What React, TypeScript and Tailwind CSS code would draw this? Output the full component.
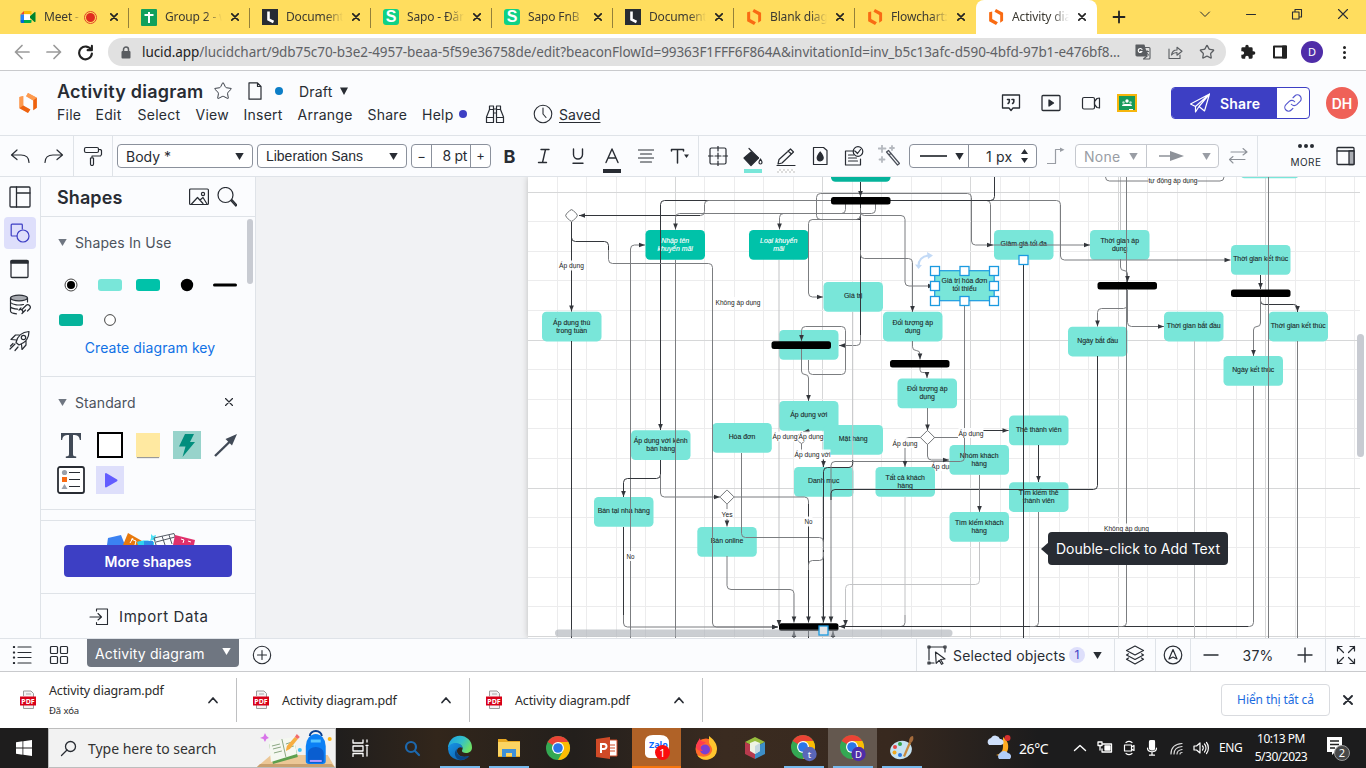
import React from "react";
import { Star } from "lucide-react";

type Kids = { children?: React.ReactNode };

const UI = "font-['Noto_Sans',sans-serif]";
const APP = "font-[Inter,sans-serif]";

function Ic({ s = 24, w = 1.2, c = "#282c33", vb = 24, cls = "", children }: Kids & { s?: number; w?: number; c?: string; vb?: number; cls?: string }) {
  return (
    <svg width={s} height={s} viewBox={`0 0 ${vb} ${vb}`} fill="none" stroke={c} strokeWidth={w} strokeLinecap="round" strokeLinejoin="round" className={"shrink-0 " + cls}>
      {children}
    </svg>
  );
}

function LucidLogo({ s = 16, shaded }: { s?: number; shaded?: boolean }) {
  return (
    <svg width={s} height={s} viewBox="0 0 20 21" className="shrink-0">
      <path d="M1 4.200 5 3.200V13l7.500 4.300L10 21l-9-5z" fill="#f96b13" />
      <path d="M8 3.500 10 0l9.300 5v10.500L15.500 18V8z" fill="#f96b13" />
      {shaded && <path d="M1 4.200 5 3.200V13L1 16zM8 3.500 10 0l9.300 5-3.800 3z" fill="#ffb46e" fillOpacity=".65" />}
      {shaded && <path d="m5 13 7.500 4.300L10 21l-9-5zM19.300 5v10.500L15.500 18V8z" fill="#d9530a" fillOpacity=".35" />}
    </svg>
  );
}

const favicons: Record<string, React.ReactNode> = {
  meet: (
    <svg width="16" height="16" viewBox="0 0 16 16">
      <path d="M4 2h7.5v3.2H4z" fill="#fbbc04" />
      <path d="M.5 5.5 4 2v3.5z" fill="#ea4335" />
      <path d="M.5 5.5H4V11H.5z" fill="#2684fc" />
      <path d="M.5 11H4v3H1.5a1 1 0 0 1-1-1z" fill="#0066da" />
      <path d="M4 11h7.5v2a1 1 0 0 1-1 1H4z" fill="#00ac47" />
      <path d="m9 8 5.5-4.8a.6.6 0 0 1 1 .5v8.8a.6.6 0 0 1-1 .4z" fill="#00832d" />
      <path d="M4 5.2h6V11H4z" fill="#fff" />
    </svg>
  ),
  sheet: (
    <svg width="16" height="17" viewBox="0 0 16 17">
      <rect width="16" height="17" rx="1" fill="#12a05c" />
      <path d="M8 3v11M3.5 6h9" stroke="#fff" strokeWidth="2" />
    </svg>
  ),
  doc: (
    <svg width="16" height="16" viewBox="0 0 16 16">
      <rect width="16" height="16" fill="#282c33" />
      <path d="M6.5 2.5v8l5 2.5" stroke="#fff" strokeWidth="2.6" fill="none" />
    </svg>
  ),
  sapo: (
    <span className="flex h-4 w-4 items-center justify-center rounded-[3px] bg-[#0fd186] font-['Liberation_Sans',sans-serif] text-[16px] leading-none font-bold text-white">S</span>
  ),
  lucid: <LucidLogo />,
};

function Tab({ icon, title, active, rec, sep = true }: { icon: string; title: string; active?: boolean; rec?: boolean; sep?: boolean }) {
  return (
    <div className={"relative flex h-[34px] w-[121px] shrink-0 items-center pl-3 " + (active ? "rounded-t-lg bg-white" : "")}>
      {favicons[icon]}
      <span className={"ml-2 overflow-hidden text-[12px] tracking-[-0.15px] whitespace-nowrap text-[#3c3a32] [mask-image:linear-gradient(90deg,#000_70%,transparent)] " + (rec ? "w-[37px]" : "w-[57px]")}>{title}</span>
      {rec && (
        <span className="ml-[3px] flex h-[13px] w-[13px] items-center justify-center rounded-full border border-[#e2452b]">
          <span className="h-[9px] w-[9px] rounded-full bg-[#e02c20]" />
        </span>
      )}
      <Ic s={8} vb={8} w={1.7} c="#222" cls={rec ? "ml-[13px]" : "ml-[9px]"}><path d="M.8.8l6.4 6.4M7.2.8.8 7.2" /></Ic>
      {sep && !active && <span className="absolute top-2 right-0 h-5 w-px bg-[#94803a]" />}
    </div>
  );
}

function BrowserTop() {
  return (
    <div className={UI}>
      <div className="flex h-[34px] bg-[#ffdd5e] pl-2">
        <Tab icon="meet" title="Meet - " rec />
        <Tab icon="sheet" title="Group 2 - w" />
        <Tab icon="doc" title="Documents" />
        <Tab icon="sapo" title="Sapo - Đăng" />
        <Tab icon="sapo" title="Sapo FnB" />
        <Tab icon="doc" title="Documents" />
        <Tab icon="lucid" title="Blank diagra" />
        <Tab icon="lucid" title="Flowchart: " sep={false} />
        <Tab icon="lucid" title="Activity diag" active />
        <div className="flex w-[44px] items-center justify-center"><Ic s={14} vb={14} w={1.8} c="#222"><path d="M7 1.5v11M1.5 7h11" /></Ic></div>
        <div className="ml-auto flex items-start pt-[8px]">
          <Ic s={12} vb={12} w={1} cls="mr-[34px]"><path d="m1.500 4 4.500 4.500L10.500 4" /></Ic>
          <Ic s={12} vb={12} w={1.1} cls="mr-[34px]"><path d="M1.500 6.500h9" /></Ic>
          <Ic s={12} vb={12} w={1.1} cls="mr-[34px]"><path d="M1.500 4h6.500v7H1.500zM4 4V1.500h6.500V9H8" /></Ic>
          <Ic s={12} vb={12} w={1.1} cls="mr-[17px]"><path d="m1.500 1.500 9 9m0-9-9 9" /></Ic>
        </div>
      </div>
      <div className="flex h-[37px] items-center border-b border-[#c9cacd] bg-white pl-[14px]">
        <Ic s={16} vb={16} w={1.7} c="#9a9a9a"><path d="M15 8H1.500M8 1.500 1.500 8 8 14.500" /></Ic>
        <Ic s={16} vb={16} w={1.7} c="#9a9a9a" cls="ml-4"><path d="M1 8h13.500M8 1.500 14.500 8 8 14.500" /></Ic>
        <Ic s={17} vb={16} w={2} c="#222" cls="ml-[15px]"><path d="M13.300 5.500A6 6 0 1 0 14 9M14 1.800v4h-4" /></Ic>
        <div className="ml-[14px] flex h-7 w-[1118px] items-center rounded-full bg-[#e1e1e1] pl-[13px]">
          <svg width="10" height="13" viewBox="0 0 10 13" className="shrink-0"><path d="M2.500 6V3.500a2.500 2.500 0 0 1 5 0V6" stroke="#5a5d61" strokeWidth="1.500" fill="none" /><rect x=".5" y="5" width="9" height="7.500" rx="1" fill="#5a5d61" /></svg>
          <span className="ml-[11px] w-[982px] shrink-0 text-[13.5px] tracking-[-0.07px] whitespace-nowrap text-[#5f6266]"><span className="text-[#222]">lucid.app</span>/lucidchart/9db75c70-b3e2-4957-beaa-5f59e36758de/edit?beaconFlowId=99363F1FFF6F864A&amp;invitationId=inv_b5c13afc-d590-4bfd-97b1-e476bf8...</span>
          <Ic s={16} vb={16} w={1.1} c="#5a5d61" cls="ml-[11px]"><path d="M1 1h8l3 11H2a1 1 0 0 1-1-1z" fill="#5a5d61" /><path d="M10 3.500h4a1 1 0 0 1 1 1V14a1 1 0 0 1-1 1H8.500l3.500-3M10.500 7.500h3M12 6.500v1c0 2-1 3-1.500 3.500M11.500 8.500l2 2.500" /><path d="M7 5.500a2 2 0 1 0 0 2H5.500" stroke="#fff" /></Ic>
          <Ic s={16} vb={16} w={1.1} c="#5a5d61" cls="ml-4"><path d="M2 5v9.500h11V11M4.500 11C5 7.500 7 6 10 6V3.200L15 7.200l-5 4V8.500C8 8.500 6 9 4.500 11z" /></Ic>
          <Star size={16} strokeWidth={1.9} color="#5a5d61" className="ml-4" />
        </div>
        <svg width="16" height="16" viewBox="0 0 24 24" className="ml-[14px]"><path d="M20.500 11H19V7a2 2 0 0 0-2-2h-4V3.500a2.500 2.500 0 0 0-5 0V5H4a2 2 0 0 0-2 2v3.800h1.500a2.700 2.700 0 0 1 0 5.400H2V20a2 2 0 0 0 2 2h3.800v-1.500a2.700 2.700 0 0 1 5.400 0V22H17a2 2 0 0 0 2-2v-4h1.500a2.500 2.500 0 0 0 0-5z" fill="#222" /></svg>
        <Ic s={14} vb={14} w={2} c="#222" cls="ml-[17px]"><path d="M1 1.500h12v11H1z" /><path d="M10 1.500h3v11h-3z" fill="#222" /></Ic>
        <span className="ml-[14px] flex h-[22px] w-[22px] items-center justify-center rounded-full bg-[#4f2da8] text-[11px] text-white">D</span>
        <span className="ml-5 flex flex-col gap-[2px]">
          <i className="h-[3px] w-[3px] rounded-full bg-[#222]" /><i className="h-[3px] w-[3px] rounded-full bg-[#222]" /><i className="h-[3px] w-[3px] rounded-full bg-[#222]" />
        </span>
      </div>
    </div>
  );
}

function AppHeader() {
  return (
    <div className={"flex h-[64px] bg-[#fbfcfe] text-[#282c33] " + APP}>
      <div className="flex w-[57px] items-center pl-[18px]"><LucidLogo s={20} shaded /></div>
      <div className="w-[560px] pt-[8px]">
        <div className="flex h-6 items-center">
          <span className="w-[156px] text-[18px] font-semibold tracking-[0.25px] whitespace-nowrap">Activity diagram</span>
          <Star size={20} strokeWidth={1.2} color="#3c414a" />
          <Ic s={18} vb={18} w={1.2} cls="ml-[13px]"><path d="M3 .8h8.500L15 4.500v12.700H3zM11.500.8v3.700H15" /></Ic>
          <span className="ml-[11px] h-2 w-2 rounded-full bg-[#0c7ec7]" />
          <span className="ml-4 w-[41px] text-[14px] tracking-[0.2px]">Draft</span>
          <svg width="8" height="8" viewBox="0 0 8 8"><path d="M0 .5h8L4 8z" fill="#282c33" /></svg>
        </div>
        <div className="-mt-px flex h-6 items-center text-[14px] tracking-[0.25px] whitespace-nowrap">
          <span className="w-[38.5px]">File</span><span className="w-[42px]">Edit</span><span className="w-[58px]">Select</span><span className="w-[48px]">View</span>
          <span className="w-[54px]">Insert</span><span className="w-[70px]">Arrange</span><span className="w-[54.5px]">Share</span><span className="w-[37px]">Help</span>
          <span className="h-2 w-2 rounded-full bg-[#3d3fc4]" />
          <Ic s={20} vb={20} w={1.2} cls="ml-[18px]"><path d="M4.500 5.500V2h4v3.500M11.500 5.500V2h4v3.500M4.500 5.500h4v13H1.500V13zM15.500 5.500h-4v13h7V13zM8.500 9h3M1.500 13.500h7M11.500 13.500h7M8.500 5h3" /></Ic>
          <Ic s={20} vb={20} w={1.1} cls="ml-[28px]"><circle cx="10" cy="10" r="8.800" /><path d="M10 4v6l3 3.500" /></Ic>
          <span className="ml-[6px] pt-px tracking-[0.1px] underline underline-offset-2">Saved</span>
        </div>
      </div>
      <div className="ml-auto flex items-center">
        <Ic s={20} vb={20} w={1.3}><path d="M1.500 2h17v13H12l-2 2.500L8 15H1.500z" /><path d="M6.500 6.500h1.800v2c0 1-.5 1.500-1.200 2M11 6.500h1.800v2c0 1-.5 1.500-1.200 2" strokeWidth="1.600" /></Ic>
        <Ic s={20} vb={20} w={1.3} cls="ml-5"><rect x="1" y="2.500" width="18" height="15" rx="1" /><path d="M8 7v6l4.500-3z" fill="#282c33" /></Ic>
        <Ic s={20} vb={20} w={1.2} cls="ml-5"><rect x="1.500" y="4.500" width="12" height="11.500" rx="1.500" /><path d="m13.500 8.500 2.500-3 2.500-.500v10l-2.500-.5-2.500-3z" /></Ic>
        <svg width="20" height="18" viewBox="0 0 20 18" className="ml-4"><rect width="20" height="18" fill="#f6b60d" /><rect x="2" y="2" width="16" height="14" fill="#159a5a" /><circle cx="10" cy="7" r="1.700" fill="#fff" /><circle cx="6.500" cy="8.500" r="1.200" fill="#b6dfc9" /><circle cx="13.500" cy="8.500" r="1.200" fill="#b6dfc9" /><path d="M5 12c0-2 2-2 5-2s5 0 5 2z" fill="#fff" /><path d="M12 15h4v1h-4z" fill="#fff" /></svg>
        <div className="ml-[34px] flex h-8 w-[139px] overflow-hidden rounded border border-[#3d3fc4] bg-white">
          <div className="flex w-[105px] items-center bg-[#3d3fc4]">
            <Ic s={22} vb={22} w={1.2} c="#fff" cls="ml-[17px]"><path d="M20.500 2 1.500 12l5 2.500zM20.500 2l-5 17-5.500-4.500zM6.500 14.500V20l3.500-5.500M6.500 14.500 20.500 2 10 14.500" /></Ic>
            <span className="ml-[9px] text-[14px] font-semibold tracking-[0.2px] text-white">Share</span>
          </div>
          <div className="flex flex-1 items-center justify-center"><Ic s={20} vb={24} w={1.4} c="#5557cf"><path d="M10 13.500a4.500 4.500 0 0 0 6.500.500l4-4a4.500 4.500 0 0 0-6.400-6.400L12 5.700M14 10.500A4.500 4.500 0 0 0 7.500 10l-4 4a4.500 4.500 0 0 0 6.400 6.400l2-2" /></Ic></div>
        </div>
        <span className="mr-2 ml-4 flex h-8 w-8 items-center justify-center rounded-full bg-[#ef6158] text-[14px] font-semibold text-white">DH</span>
      </div>
    </div>
  );
}

const Down = ({ c = "#282c33", cls = "" }: { c?: string; cls?: string }) => (
  <svg width="9" height="7" viewBox="0 0 9 7" className={"shrink-0 " + cls}><path d="M.3 0h8.400L4.500 7z" fill={c} /></svg>
);

function Cell({ w, children }: Kids & { w: string }) {
  return <div className={"flex h-full shrink-0 flex-col items-center justify-center " + w}>{children}</div>;
}

function Toolbar() {
  return (
    <div className={"flex h-[42px] items-center border-y border-[#dfe3e8] bg-[#fbfcfe] text-[#282c33] " + APP}>
      <div className="flex h-full w-[74px] items-center border-r border-[#dfe3e8] pl-[10px]">
        <Ic s={20} vb={20} w={1.2}><path d="M19 16.500c0-5-3-7.500-8-7.500H1.500M7 4 1.500 9 7 13.500" /></Ic>
        <Ic s={20} vb={20} w={1.2} cls="ml-[14px]"><path d="M1 16.500C1 11.500 4 9 9 9h9.500M13 4l5.500 5-5.500 4.500" /></Ic>
      </div>
      <div className="flex h-full w-[39px] items-center justify-center border-r border-[#dfe3e8]">
        <Ic s={20} vb={20} w={1.2}><rect x="1.500" y="1.500" width="14" height="5" rx="1.500" /><path d="M15.500 3.500h2l1 1v4l-1 1.500H9v2M7.500 12h3v6a1.500 1.500 0 0 1-3 0z" /></Ic>
      </div>
      <div className="ml-1 flex h-[24px] w-[136px] items-center rounded border border-[#8b919c] bg-white px-2 text-[14px]">Body *<Down cls="ml-auto" /></div>
      <div className="ml-1 flex h-[24px] w-[150px] items-center rounded border border-[#8b919c] bg-white px-2 font-['Liberation_Sans',sans-serif] text-[14px]"><span className="tracking-[-0.02px]">Liberation Sans</span><Down cls="ml-auto" /></div>
      <div className="ml-1 flex h-[24px] w-[80px] items-center rounded border border-[#8b919c] bg-white text-[13px]">
        <span className="w-[20px] border-r border-[#8b919c] text-center leading-[22px]">−</span><span className="w-[39px] border-r border-[#8b919c] pr-[3px] text-right text-[14px] leading-[22px] tracking-[-0.3px]">8 pt</span><span className="flex-1 text-center">+</span>
      </div>
      <Cell w="w-[37px]"><span className="text-[18px] font-bold">B</span></Cell>
      <Cell w="w-[32px]"><Ic s={16} vb={16} w={1.4}><path d="M5 1.500h8M2.500 14.500h8M9.500 1.500l-3 13" /></Ic></Cell>
      <Cell w="w-[35px]"><Ic s={16} vb={16} w={1.4}><path d="M3.500 1v5.500a4.500 4.500 0 0 0 9 0V1M3 15.300h10" /></Ic></Cell>
      <Cell w="w-[33px]"><div className="mt-[9px] flex flex-col items-center"><Ic s={16} vb={16} w={1.4}><path d="M2 14.500 8 1l6 13.500M4 10h8" /></Ic><span className="mt-[5px] h-[4px] w-[18px] bg-[#282c33]" /></div></Cell>
      <Cell w="w-[35px]"><Ic s={16} vb={16} w={1.2}><path d="M0 2h16M2.500 6h11M0 10h16M2.500 14h11" /></Ic></Cell>
      <Cell w="w-[34px]"><Ic s={20} vb={20} w={1.5}><path d="M1.500 5V3.500h12V5M7.500 3.500V17" /><path d="M14 8.500h5l-2.500 3.500z" fill="#282c33" stroke="none" /></Ic></Cell>
      <div className="ml-px h-full w-px bg-[#dfe3e8]" />
      <Cell w="w-[38px]"><Ic s={20} vb={20} w={1.2}><rect x="2" y="2" width="16" height="16" rx="1.500" /><path d="M10 0v5M10 15v5M0 10h5M15 10h5M10 7v6M7 10h6" /></Ic></Cell>
      <Cell w="w-[31px]"><div className="mt-[8px] flex flex-col items-center"><Ic s={20} vb={20} w={1.2}><path d="m8 5-7 6 7 7.500 7.500-7.500z" fill="#282c33" /><path d="M6 1.500 15.500 11H2M17.500 12c1 1.500 1.500 2.500 1.500 3.500a1.500 1.500 0 0 1-3 0c0-1 .5-2 1.500-3.500z" /></Ic><span className="mt-[2px] h-[4px] w-[18px] bg-[#79e6d9]" /></div></Cell>
      <Cell w="w-[36px]"><div className="mt-[8px] flex flex-col items-center"><Ic s={20} vb={20} w={1.2}><path d="M1 18.500h18M2 17l1-4.500L14.500 2l3 3L6 16zM12 4l3.500 3" /></Ic><span className="mt-[2px] h-[4px] w-[18px] bg-[repeating-conic-gradient(#ddd_0_25%,#fff_0_50%)] bg-[length:4px_4px]" /></div></Cell>
      <Cell w="w-[32px]"><Ic s={20} vb={20} w={1.2}><path d="M3.500 1.500h10L17 4.500v14H3.500z" /><path d="M10.200 6c2 2.500 3 4.200 3 5.800a3 3 0 0 1-6 0c0-1.600 1-3.300 3-5.800z" fill="#282c33" /></Ic></Cell>
      <Cell w="w-[36px]"><Ic s={20} vb={20} w={1.2}><path d="M11 5H1.500v14h15v-6M4.500 9h5M4.500 12h8M4.500 15h9" /><circle cx="14" cy="5.500" r="4.800" /><path d="m11.500 5.500 2 2 3-4" /></Ic></Cell>
      <Cell w="w-[34px]"><Ic s={22} vb={22} w={1.2} c="#4b505a"><path d="m8.500 7 11 13 2-1.500-11-13zM11 10l2-1.800" /><path d="M4 0v7M.5 3.500h7M4 12v5M1.500 14.500h5M14 1v4M12 3h4" stroke="#b5b9bf" strokeWidth="1.800" /></Ic></Cell>
      <div className="ml-[3px] flex h-[24px] w-[128px] items-center rounded border border-[#8b919c] bg-white">
        <div className="flex h-full w-[59px] items-center border-r border-[#8b919c]"><span className="ml-[10px] h-[1.5px] w-[27px] bg-[#4a4d52]" /><Down cls="ml-[8px]" /></div>
        <span className="ml-[17px] text-[14px] tracking-[0.2px]">1 px</span>
        <svg width="7" height="14" viewBox="0 0 7 14" className="ml-[9px]"><path d="M0 5h7L3.500 0zM0 9h7l-3.500 5z" fill="#282c33" /></svg>
      </div>
      <Cell w="w-[38px]"><Ic s={18} vb={18} w={1.2} c="#999da4"><path d="M.5 16.500h8v-14h5" /><path d="M13 .5 17.500 2.700 13 5z" fill="#999da4" stroke="none" /></Ic></Cell>
      <div className="flex h-[24px] w-[144px] items-center rounded border border-[#c5c8ce] bg-white text-[#999da4]">
        <div className="flex h-full w-[71px] items-center border-r border-[#c5c8ce] pl-[8px] text-[14px] tracking-[0.3px]">None<Down c="#999da4" cls="ml-auto mr-2" /></div>
        <svg width="25" height="10" viewBox="0 0 25 10" className="ml-[12px]"><path d="M0 5h12" stroke="#8e9299" strokeWidth="1.500" /><path d="M11 0l14 5-14 5z" fill="#8e9299" /></svg>
        <Down c="#999da4" cls="ml-[18px]" />
      </div>
      <Cell w="w-[38px]"><Ic s={20} vb={20} w={1.1} c="#8e9299"><path d="M3 6h16M15 2.500 19 6l-4 3M17 13.500H1.500M5 10.500l-3.500 3L5 17" /></Ic></Cell>
      <div className="h-full w-px bg-[#dfe3e8]" />
      <div className="ml-[32px] flex w-[32px] flex-col items-center gap-[7px]">
        <span className="flex gap-[2px] pt-px"><i className="h-[4px] w-[4px] rounded-full bg-[#282c33]" /><i className="h-[4px] w-[4px] rounded-full bg-[#282c33]" /><i className="h-[4px] w-[4px] rounded-full bg-[#282c33]" /></span>
        <span className="text-[10px] leading-[14px] tracking-[0.5px]">MORE</span>
      </div>
      <Ic s={20} vb={20} w={1.3} cls="ml-[14px]"><rect x="1" y="1.500" width="17" height="17" rx="1" /><path d="M1 5h17" /><path d="M13 5h5v13.500h-5z" fill="#aaadb3" /></Ic>
    </div>
  );
}

function SidePanel() {
  return (
    <div className={"flex w-[256px] shrink-0 bg-[#fbfcfe] text-[#282c33] " + APP}>
      <div className="flex w-[41px] shrink-0 flex-col items-center border-r border-[#dfe3e8]">
        <Ic s={22} vb={22} w={1.3} cls="mt-[9px]"><rect x="1" y="1" width="20" height="20" rx="1" /><path d="M7.500 1v20M7.500 7H21" /></Ic>
        <div className="mt-[9px] flex h-8 w-8 items-center justify-center rounded bg-[#dedffb]"><Ic s={20} vb={20} w={1.2} c="#3d3fc4"><path d="M7 13H2a.8.800 0 0 1-.8-.8V2A.8.800 0 0 1 2 1.200h9.500a.8.800 0 0 1 .8.800v4" /><circle cx="13" cy="13" r="6" /></Ic></div>
        <Ic s={20} vb={20} w={1.3} cls="mt-[10px]"><rect x="1" y="1.500" width="17" height="17" rx="1" /><path d="M1 2h17v2H1z" fill="#282c33" /></Ic>
        <Ic s={22} vb={22} w={1.2} cls="mt-[15px]"><ellipse cx="10" cy="4" rx="8.500" ry="2.800" fill="#a8abb1" /><path d="M1.500 4v13c0 1.500 3 2.500 6 2.800M18.500 4v4M1.500 8.500c2 2.500 9 3 13 2M1.500 13c1.500 1.500 4 2 7 2.200" /><path d="m13 14 3.500-3.500a2.300 2.300 0 0 1 3.500 3.500l-2 2M16 15l-3.500 3.500A2.300 2.300 0 0 0 9.500 15l2-2" transform="translate(.5 1)" /></Ic>
        <Ic s={22} vb={22} w={1.2} cls="mt-[14px]"><path d="M7 12.500C8.500 6 13 2 20 1.500 20 8.500 16 13 10 15zM7.500 10 2 9.500 6.500 5h4M12.500 14.500l.5 5 4-4.500v-4" /><circle cx="14.500" cy="7.500" r="2.200" /><path d="m6 14-5 5M9 17l-3 3.500M4 13.500l-2.500 2.500" /></Ic>
      </div>
      <div className="flex w-[215px] flex-col border-r border-[#dfe3e8]">
        <div className="flex h-[40px] shrink-0 items-center border-b border-[#dfe3e8] pl-4">
          <span className="w-[132px] pt-0.5 text-[18px] font-semibold tracking-[0.1px]">Shapes</span>
          <Ic s={20} vb={20} w={1.2}><rect x=".6" y="2" width="18.800" height="15.500" rx="1" /><circle cx="14" cy="7" r="1.600" /><path d="m2.500 17 6-6.500 5.500 6M11 13l3-2.500 4 6.500" /></Ic>
          <Ic s={20} vb={20} w={1.2} cls="ml-2"><circle cx="8.500" cy="8" r="7.500" /><path d="m13.800 13.500 5 5.500 1-1-5-5.500" /></Ic>
        </div>
        <div className="relative flex-1 border-b border-[#dfe3e8]">
          <div className="flex h-[160px] flex-col border-b border-[#dfe3e8] px-[17px] pt-[15px]">
            <div className="flex h-5 items-center text-[14px] tracking-[0.1px] text-[#4c535d]"><Down c="#6f7681" cls="mr-2" />Shapes In Use</div>
            <div className="mt-[23px] flex h-5 items-center">
              <svg width="180" height="14" viewBox="0 0 180 14">
                <circle cx="13" cy="7" r="6" fill="#fff" stroke="#444" /><circle cx="13" cy="7" r="4" />
                <rect x="40" y="1" width="24" height="12" rx="3" fill="#79e6d9" /><rect x="78" y="1" width="24" height="12" rx="3" fill="#00c2a9" />
                <circle cx="129" cy="7" r="6.200" /><rect x="155" y="5.500" width="24" height="3" rx="1.500" />
              </svg>
            </div>
            <div className="mt-[15px] flex h-5 items-center">
              <svg width="100" height="14" viewBox="0 0 100 14"><rect x="1" y="1" width="24" height="12" rx="3" fill="#05b39b" /><circle cx="52" cy="7" r="5.400" fill="#fff" stroke="#444" /></svg>
            </div>
            <div className="mt-[7px] pl-1 text-center text-[14px] tracking-[0.1px] text-[#1071e5]">Create diagram key</div>
          </div>
          <div className="flex h-[133px] flex-col border-b border-[#dfe3e8] px-[17px] pt-[15px]">
            <div className="flex h-5 items-center text-[14px] tracking-[0.1px] text-[#4c535d]"><Down c="#6f7681" cls="mr-2" />Standard<Ic s={8} vb={8} w={1.2} cls="mr-[5px] ml-auto"><path d="m.5.500 7 7m0-7-7 7" /></Ic></div>
            <div className="mt-[19px] flex h-7 items-center">
              <span className="w-[34px] pl-[2px]">
                <svg width="22" height="26" viewBox="0 0 22 26"><path d="M1 8V1h20v7h-1.200c-.4-3-1.500-4.800-5-5H13v19c0 2 1 2.300 3.200 2.500V26H5.800v-1.500C8 24.300 9 24 9 22V3H7.200c-3.500.2-4.600 2-5 5z" fill="#414a57" /></svg>
              </span>
              <span className="ml-[5px] h-[26px] w-[26px] border-2 border-black bg-white" />
              <span className="ml-[13px] h-[24px] w-[24px] bg-[#ffe9a1] shadow-[0_2px_1px_-1px_#999]" />
              <svg width="28" height="28" viewBox="0 0 28 28" className="ml-[13px]"><path d="M0 0h28v28H0z" fill="#97d3cb" /><path d="M12 3h9l-4 8h5L9.500 26l3-10.500H6z" fill="#018e7d" /></svg>
              <svg width="26" height="26" viewBox="0 0 26 26" className="ml-[11px]"><path d="M3 24 20 7.500" stroke="#414a57" strokeWidth="2.400" /><path d="M25 2 13.500 7l6.500 6.500z" fill="#414a57" /></svg>
            </div>
            <div className="mt-[7px] flex h-7 items-center">
              <svg width="28" height="28" viewBox="0 0 28 28" className="-ml-px"><rect x="1" y="1" width="26" height="26" rx="2" fill="#fff" stroke="#282c33" strokeWidth="1.800" /><circle cx="7.500" cy="6.500" r="2.600" fill="#9aa0aa" /><path d="M5 11h5v5H5z" fill="#f96b13" /><path d="M4.500 23h6l-3-5z" fill="#9aa0aa" /><path d="M12 6.500h11M12 13.500h11M12 20.500h11" stroke="#282c33" strokeWidth="1.200" /></svg>
              <svg width="28" height="28" viewBox="0 0 28 28" className="ml-[11px]"><path d="M0 0h28v28H0z" fill="#dedffb" /><path d="M10 8v12.500L20.500 14.300z" fill="#635dff" stroke="#635dff" strokeWidth="2" strokeLinejoin="round" /></svg>
            </div>
          </div>
          <span className="absolute top-[2px] right-[2px] h-[65px] w-[6px] rounded-full bg-[#c8cbd2]" />
        </div>
        <div className="flex h-[73px] shrink-0 flex-col items-center border-b border-[#dfe3e8]">
          <svg width="92" height="12" viewBox="0 0 92 12" className="mt-[12px] ml-[5px]">
            <path d="M3 5 16 2l4 10H2z" fill="#3b82f2" /><path d="m23 0 14 8-3 4H18z" fill="#e8790c" /><path d="m26 6 5 2-1 4M28 5l-3 5" stroke="#fff" fill="none" />
            <path d="M32 9c5-2 12-2 17 0v3H33z" fill="#2ed3ee" /><path d="M39 8h9v4h-9z" fill="#2f8de9" /><path d="m46 1 2 2 3-1-1 4 1 2-3-1-3 1 1-3z" fill="#4de0f5" />
            <path d="M49 5 69 .5l4 11M49 5l2 7M51 9l19-5M57 3l3 9M64 2l3 9" stroke="#555b66" fill="none" /><path d="m70 2 20 5-1 5H68z" fill="#e0316c" /><path d="M76 6l3 1-1 3M83 8l3 1" stroke="#fff" fill="none" />
          </svg>
          <div className="flex h-8 w-[168px] items-center justify-center rounded bg-[#3d3fc4] text-[14px] font-semibold tracking-[-0.05px] text-white">More shapes</div>
        </div>
        <div className="flex h-[44px] shrink-0 items-center pt-[3px] pl-[48px] text-[15px] tracking-[0.6px]">
          <Ic s={20} vb={20} w={1.1} cls="mr-[10px] -mt-[2px]"><path d="M7.500 4V2h11v15.500h-11v-2M1 10h11.500M9 6.500l3.500 3.500L9 13" /></Ic>Import Data
        </div>
      </div>
    </div>
  );
}

const LIGHT = "#79e6d9", MID = "#00c2a9";
type Node = [number, number, string[], string?];
const nodes: Node[] = [
  [831, 152, [], "#05b39b"], [1240, 148.5, []],
  [645.5, 230, ["Nhập tên", "khuyến mãi"], MID], [749, 230, ["Loại khuyến", "mãi"], MID],
  [542, 311.7, ["Áp dụng thù", "trong tuần"]], [823.5, 282, ["Giá trị"]], [779, 330, []],
  [883, 311.7, ["Đối tượng áp", "dụng"]], [994, 230, ["Giảm giá tối đa"]], [1090, 230, ["Thời gian áp", "dụng"]],
  [1231, 245, ["Thời gian kết thúc"]], [1268.5, 311.7, ["Thời gian kết thúc"]], [1164, 311.7, ["Thời gian bắt đầu"]],
  [1068, 326.7, ["Ngày bắt đầu"]], [1223.5, 356, ["Ngày kết thúc"]], [897.5, 378.5, ["Đối tượng áp", "dụng"]],
  [1009, 415.5, ["Thẻ thành viên"]], [949.5, 445, ["Nhóm khách", "hàng"]], [875.5, 467, ["Tất cả khách", "hàng"]],
  [1009, 482.2, ["Tìm kiếm thẻ", "thành viên"]], [949.5, 512, ["Tìm kiếm khách", "hàng"]],
  [779, 401, ["Áp dụng với"]], [712.3, 423, ["Hóa đơn"]], [823.5, 425, ["Mặt hàng"]], [794, 467, ["Danh mục"]],
  [631, 430.3, ["Áp dụng với kênh", "bán hàng"]], [594, 497, ["Bán tại nhà hàng"]], [697.3, 527, ["Bán online"]],
];
const bars: [number, number][] = [[831, 197], [771.5, 341.3], [890, 360], [1097.5, 282], [1231, 289.5], [779, 623.3]];

/* Each connector: stroke shade, corner points, arrow head at the end. */
type Wire = [string, number[], boolean?];
const K = "#33363b", G = "#7b7d80", L = "#c2c3c5";
const wires: Wire[] = [
  [K, [860.5, 182, 860.5, 197], true],
  [K, [831, 200.5, 660.5, 200.5, 660.5, 430], true],
  [G, [831, 200.5, 704.5, 200.5, 704.5, 215.5, 690, 215.5]],
  [K, [700, 215.5, 579, 215.5], true],
  [G, [845.5, 204, 845.5, 213.5, 675.5, 213.5, 675.5, 229.5], true],
  [G, [875.5, 204, 875.5, 213.5, 779.5, 213.5, 779.5, 229.5], true],
  [G, [860.5, 210, 860.5, 219.5, 816.5, 219.5, 816.5, 193.5, 971.5, 193.5, 971.5, 245, 993, 245], true],
  [K, [890, 200.5, 990, 200.5]],
  [G, [990, 200.5, 1060.5, 200.5, 1060.5, 260, 1230.5, 260], true],
  [G, [980, 200.5, 990.5, 200.5, 990.5, 245, 993, 245]],
  [K, [994.5, 177, 994.5, 200.5, 980, 200.5]],
  [G, [993, 245, 1090, 245], true],
  [K, [860.5, 204, 860.5, 335]], [G, [860.5, 335, 860.5, 345.5, 839, 345.5], true],
  [K, [860.5, 219.5, 812.5, 219.5]],
  [G, [860.5, 210, 860.5, 219.5, 808.5, 219.5, 808.5, 297, 823, 297], true],
  [G, [860.5, 208, 860.5, 215.5, 905, 215.5, 905, 286, 934, 286], true],
  [G, [860.5, 250, 860.5, 258.5, 912.5, 258.5, 912.5, 312], true],
  [K, [571.5, 222, 571.5, 311.5], true],
  [K, [571.5, 341, 571.5, 638]],
  [K, [571.5, 230, 571.5, 241.5, 608.5, 241.5, 608.5, 252]],
  [G, [608.5, 250, 608.5, 263.5, 712.5, 263.5, 712.5, 627, 778, 627], true],
  [G, [630.5, 638, 630.5, 245, 645, 245], true],
  [G, [675.5, 260, 675.5, 638]],
  [L, [779, 260, 779, 626], true],
  [G, [845.5, 350, 845.5, 326.5, 801.5, 326.5, 801.5, 341], true],
  [G, [845.5, 345, 845.5, 374.5, 808.5, 374.5, 808.5, 360]],
  [G, [801.5, 349, 801.5, 374.5, 808.5, 374.5, 808.5, 401], true],
  [L, [852.7, 312, 852.7, 627]],
  [K, [852.7, 460, 852.7, 467.5, 823.5, 467.5, 823.5, 622.5], true],
  [K, [823.5, 458, 823.5, 467], true],
  [G, [964.5, 301, 964.5, 461.5, 831, 461.5, 831, 622.5], true],
  [K, [1097.5, 356, 1097.5, 489.5, 831, 489.5, 831, 500]],
  [K, [810, 431, 803, 432], true],
  [G, [801.5, 444, 801.5, 452]],
  [G, [741.5, 453, 741.5, 537.5, 823.5, 537.5, 823.5, 550]],
  [K, [660.5, 460, 660.5, 478.5, 623.5, 478.5, 623.5, 497], true],
  [K, [623.5, 527, 623.5, 620]], [G, [623.5, 615, 623.5, 627, 778, 627], true],
  [G, [660.5, 475, 660.5, 497, 720, 497], true],
  [G, [734, 497, 808.5, 497, 808.5, 510]],
  [K, [808.5, 504, 808.5, 622.5], true],
  [G, [808.5, 570, 808.5, 560.5, 823.5, 560.5, 823.5, 552]],
  [G, [727, 504, 727, 526.5], true],
  [G, [727, 556, 727, 589.5, 794, 589.5, 794, 622.5], true],
  [L, [979.5, 542, 979.5, 584.5, 845.5, 584.5, 845.5, 626], true],
  [G, [905, 615, 905, 626.5, 890, 626.5]], [L, [905, 497, 905, 622]],
  [G, [1253.5, 386, 1253.5, 626.5, 1238, 626.5]],
  [K, [1248, 626.5, 839, 626.5], true],
  [G, [1038.5, 512, 1038.5, 626.5, 1030, 626.5]],
  [G, [1126.5, 177, 1126.5, 626.5, 1118, 626.5]],
  [G, [912.5, 341, 912.5, 350.5, 920, 350.5, 920, 359.5], true],
  [G, [920, 367, 920, 372.5, 927, 372.5, 927, 378], true],
  [G, [927.5, 408, 927.5, 430.5], true],
  [G, [920.5, 437.5, 905, 437.5, 905, 467], true],
  [G, [934, 437.5, 958, 437.5]], [K, [983, 430.5, 1008.5, 430.5], true],
  [G, [927.5, 444, 927.5, 460, 949, 460], true],
  [K, [1038.5, 445, 1038.5, 482], true], [G, [979.5, 475, 979.5, 512], true],
  [K, [1023.5, 264, 1023.5, 638]],
  [L, [1120.5, 177, 1120.5, 230]],
  [G, [1120.5, 259, 1120.5, 270.5, 1127.5, 270.5, 1127.5, 282], true],
  [K, [1127.5, 290, 1127.5, 306]],
  [G, [1127.5, 290, 1127.5, 308.5, 1097.5, 308.5, 1097.5, 326.5], true],
  [G, [1127.5, 290, 1127.5, 326.5, 1164, 326.5], true],
  [K, [1260.5, 275, 1260.5, 289], true],
  [K, [1260.5, 297, 1260.5, 304.5, 1297.5, 304.5, 1297.5, 312], true],
  [G, [1260.5, 297, 1260.5, 326.5, 1253.5, 326.5, 1253.5, 356], true],
  [G, [1268.5, 177, 1268.5, 638]], [G, [1297.5, 341, 1297.5, 638]], [L, [1194.5, 341, 1194.5, 638]],
  [G, [1105.5, 170, 1105.5, 181, 1224, 181, 1224, 170]],
  [K, [794, 640, 794, 631], true], [K, [833, 640, 833, 631], true], [K, [808.5, 640, 808.5, 631]],
];
const labels: [number, number, string, number][] = [
  [571.5, 265.5, "Áp dụng", 25], [738, 302, "Không áp dụng", 45], [785, 436.500, "Áp dụng", 25], [811, 436.5, "Áp dụng", 25],
  [812.5, 454.5, "Áp dụng với", 36], [905, 443, "Áp dụng", 25], [971, 433, "Áp dụng", 25], [944, 466, "Áp dụng", 26],
  [727, 514, "Yes", 11], [808.5, 521.5, "No", 8], [630.5, 556, "No", 8], [1126.5, 528.5, "Không áp dụng", 45], [1173, 180, "tự động áp dụng", 49],
];

function wirePath(p: number[]) {
  let d = `M${p[0]} ${p[1]}`;
  for (let i = 2; i < p.length; i += 2) {
    const x = p[i], y = p[i + 1], px = p[i - 2], py = p[i - 1];
    if (i + 2 >= p.length) { d += `L${x} ${y}`; break; }
    const nx = p[i + 2], ny = p[i + 3];
    const a = Math.hypot(x - px, y - py), b = Math.hypot(nx - x, ny - y), r = Math.min(4, a / 2, b / 2);
    d += `L${x - ((x - px) / a) * r} ${y - ((y - py) / a) * r}Q${x} ${y} ${x + ((nx - x) / b) * r} ${y + ((ny - y) / b) * r}`;
  }
  return d;
}

function Arrow({ p }: { p: number[] }) {
  const n = p.length, x = p[n - 2], y = p[n - 1];
  const deg = (Math.atan2(y - p[n - 3], x - p[n - 4]) * 180) / Math.PI;
  return <path d="M0 0-6-2.300V2.300z" fill="#33363b" transform={`translate(${x} ${y}) rotate(${deg})`} />;
}

const isLabelUnder = (i: number) => i === 7;

function Label({ l }: { l: [number, number, string, number] }) {
  return (
    <g>
      <rect x={l[0] - l[3] / 2} y={l[1] - 5} width={l[3]} height="10" fill="#fff" fillOpacity=".9" />
      <text x={l[0]} y={l[1] + 2.5} textLength={l[3]} lengthAdjust="spacingAndGlyphs" fontSize="7" textAnchor="middle" fill="#222">{l[2]}</text>
    </g>
  );
}

const handles: [number, number][] = [[935, 271], [964.5, 271], [994, 271], [935, 286], [994, 286], [935, 301], [964.5, 301], [994, 301], [1023.5, 260], [823.5, 630.5]];
const range = (a: number, step: number, max: number) => Array.from({ length: Math.floor((max - a) / step) + 1 }, (_, i) => a + i * step);

function Diagram() {
  return (
    <svg width="832" height="461" viewBox="528 177 832 461" className="block font-['Liberation_Sans',sans-serif]">
      <g shapeRendering="crispEdges">
        {range(557.5, 29.54, 1366).map((x, i) => <path key={"v" + i} d={`M${Math.round(x) - 0.5} 177v461`} stroke={i % 5 === 4 ? "#d6d7d8" : "#ececed"} />)}
        {range(192.5, 29.62, 638).map((y, i) => <path key={"h" + i} d={`M528 ${Math.round(y) - 0.5}h840`} stroke={i % 5 === 0 ? "#d6d7d8" : "#ececed"} />)}
      </g>
      {labels.map((l, i) => isLabelUnder(i) && <Label key={i} l={l} />)}
      {nodes.map((n, i) => <rect key={i} x={n[0]} y={n[1]} width="59.5" height="29.7" rx="4.500" fill={n[3] ?? LIGHT} />)}
      {[[571.5, 215.5, 6.4, 2.4], [927.5, 437.5, 6.8, 0.6], [727, 497, 6.8, 0.6], [801.5, 438, 5.800, 1.5]].map(([x, y, r, q]) => (
        <rect key={x} x={x - r * 0.74} y={y - r * 0.74} width={r * 1.48} height={r * 1.48} rx={q} transform={`rotate(45 ${x} ${y})`} fill="#fff" stroke="#55585c" strokeWidth=".8" />
      ))}
      {nodes.map((n, i) => n[2].map((t, j) => (
        <text key={i + "-" + j} x={n[0] + 29.7} y={n[1] + (n[2].length > 1 ? 12.8 + j * 8 : 16.200)} textAnchor="middle" fontSize="6.900" stroke={n[3] ? "#fff" : "#1d2a2a"} strokeWidth=".12" fontStyle={n[3] ? "italic" : undefined} fill={n[3] ? "#fff" : "#1d2a2a"}>{t}</text>
      )))}
      {wires.map((w, i) => <path key={i} d={wirePath(w[1])} fill="none" stroke={w[0]} strokeWidth="1" />)}
      {wires.map((w, i) => w[2] && <Arrow key={i} p={w[1]} />)}
      <rect x="934.7" y="270.7" width="59.5" height="30" fill={LIGHT} stroke="#1b9ae0" strokeWidth="1.200" />
      <text x="964.5" y="283" fontSize="6.900" textAnchor="middle" stroke="#1d2a2a" strokeWidth=".12" fill="#1d2a2a">Giá trị hóa đơn</text>
      <text x="964.5" y="291" fontSize="6.900" textAnchor="middle" stroke="#1d2a2a" strokeWidth=".12" fill="#1d2a2a">tối thiểu</text>
      {bars.map(([x, y]) => <rect key={x + "," + y} x={x} y={y} width="59.5" height="7.600" rx="2.500" />)}
      {labels.map((l, i) => !isLabelUnder(i) && <Label key={i} l={l} />)}
      <path d="M918.500 266c0-5 3-9.500 10-10.500" fill="none" stroke="#c3daf6" strokeWidth="2" /><path d="m915 264.500 7 .5-3.500 4zM927 252l6 3.500-5 3.500z" fill="#c3daf6" />
      <rect x="555" y="629.5" width="397.500" height="7" rx="3.500" fill="#a9adb4" fillOpacity=".6" />
      {handles.map(([x, y]) => <rect key={x + "," + y} x={x - 4.5} y={y - 4.5} width="9" height="9" fill={y > 600 ? "#e3e5e8" : "#fff"} stroke="#1b9ae0" strokeWidth="1.300" />)}
    </svg>
  );
}

function Canvas() {
  return (
    <div className={"relative flex flex-1 overflow-hidden bg-[#f1f2f4] " + APP}>
      <div className="ml-[272px] w-[838px] shrink-0 bg-white shadow-[0_0_6px_#bbb]"><Diagram /></div>
      <span className="absolute top-[157px] right-[2px] h-[123px] w-[7px] rounded-full bg-[#c8cbd2]" />
      <div className="absolute top-[355px] left-[792px] flex h-[33px] w-[180px] items-center justify-center rounded bg-[#282c33] text-[14px] tracking-[0.02px] whitespace-nowrap text-white">
        Double-click to Add Text
        <svg width="8" height="14" viewBox="0 0 8 14" className="absolute top-[10px] -left-[7px]"><path d="M8 0v14L0 7z" fill="#282c33" /></svg>
      </div>
    </div>
  );
}

function BottomBar() {
  const sep = "h-full w-px bg-[#dfe3e8]";
  return (
    <div className={"flex h-[34px] items-center border-t border-b border-t-[#dfe3e8] border-b-[#c9cacd] bg-[#fbfcfe] text-[14px] text-[#282c33] " + APP}>
      <Ic s={20} vb={20} w={1.2} cls="ml-[12px]"><path d="M6 2h13M6 7.500h13M6 12.500h13M6 18h13" /><path d="M1.500 1.500h1v1h-1zM1.500 7h1v1h-1zM1.500 12h1v1h-1zM1.500 17.500h1v1h-1z" /></Ic>
      <Ic s={20} vb={20} w={1.2} cls="ml-[17px]"><rect x="1.500" y="1.500" width="7" height="7" rx="1" /><rect x="11.500" y="1.500" width="7" height="7" rx="1" /><rect x="1.500" y="11.500" width="7" height="7" rx="1" /><rect x="11.500" y="11.500" width="7" height="7" rx="1" /></Ic>
      <div className="mb-1 ml-[18px] flex h-[28px] w-[152px] items-center rounded-b bg-[#6f7681] pr-2 pl-2 tracking-[0.15px] whitespace-nowrap text-white"><span className="pt-px">Activity diagram</span><Down c="#fff" cls="-mt-1 ml-auto" /></div>
      <Ic s={20} vb={20} w={1.1} cls="ml-[13px]"><circle cx="10" cy="10" r="8.700" /><path d="M10 5.500v9M5.500 10h9" /></Ic>
      <div className="ml-auto flex h-full items-center">
        <div className={sep} />
        <Ic s={20} vb={20} w={1.2} cls="ml-[10px]"><path d="M2 15V3M2 2h15M18 3v4M2 18h5" /><path d="M1 1h2v2H1zM17 1h2v2h-2zM1 17h2v2H1z" /><path d="m8.500 7 9.500 7-4.500.5 2.500 4-1.500.8-2.300-4-3 3z" fill="#fff" /></Ic>
        <span className="ml-[6px] w-[116px] tracking-[0.15px] whitespace-nowrap">Selected objects</span>
        <span className="flex h-4 w-4 items-center justify-center rounded-full bg-[#dedffb] text-[12px] text-[#3d3fc4]">1</span>
        <Down cls="ml-2 mr-[12px]" />
        <div className={sep} />
        <Ic s={20} vb={20} w={1.2} cls="mx-[10px]"><path d="m10 1 8.500 4.500L10 10 1.500 5.500zM3.500 8.800l-2 1.200 8.500 4.500 8.500-4.500-2-1.200M3.500 13l-2 1.200L10 19l8.500-4.800-2-1.200" /></Ic>
        <div className={sep} />
        <Ic s={20} vb={20} w={1.2} cls="mx-[7px]"><circle cx="10" cy="10" r="8.800" /><path d="m6 14 4-9.500L14 14l-4-2z" /></Ic>
        <div className={sep} />
        <Ic s={16} vb={16} w={1.4} cls="ml-[12px]"><path d="M1 8h14" /></Ic>
        <span className="w-[78px] text-center tracking-[0.2px]">37%</span>
        <Ic s={16} vb={16} w={1.4} cls="mr-[12px]"><path d="M1 8h14M8 1v14" /></Ic>
        <div className={sep} />
        <Ic s={20} vb={20} w={1.2} cls="mx-[10px]"><path d="M1.500 6V1.500H6M1.500 1.500l6 6M14 1.500h4.500V6M18.500 1.500l-6 6M1.500 14v4.500H6M1.500 18.500l6-6M18.500 14v4.500H14M18.500 18.500l-6-6" /></Ic>
      </div>
    </div>
  );
}

function Download({ gone }: { gone?: boolean }) {
  return (
    <div className="flex h-[44px] w-[233px] shrink-0 items-center border-r border-[#bfc0c2] pl-[15px]">
      <svg width="18" height="20" viewBox="0 0 18 20" className="shrink-0"><path d="M4.500 6V1h7.500l2.500 2.500V18.500h-10V14" fill="#f3f3f3" stroke="#9b9b9b" /><path d="M7 4h5" stroke="#aaa" /><rect x="1" y="6.500" width="16" height="9" fill="#d80018" /><text x="9" y="13.500" fontSize="7" fontWeight="bold" fill="#fff" textAnchor="middle">PDF</text></svg>
      <div className="ml-[12px] w-[158px] whitespace-nowrap">
        <div className="text-[12.5px] leading-[17px] tracking-[-0.15px] text-[#2b2b2b]">Activity diagram.pdf</div>
        {gone && <div className="mt-[3px] text-[9.5px] leading-[17px] tracking-[-0.1px] text-[#2b2b2b]">Đã xóa</div>}
      </div>
      <Ic s={12} vb={12} w={1.7}><path d="m2 8.500 4-4.500 4 4.500" /></Ic>
    </div>
  );
}

function Downloads() {
  return (
    <div className={"flex h-[56px] items-center bg-white pl-[4px] " + UI}>
      <Download gone /><Download /><Download />
      <div className="ml-auto flex h-8 w-[109px] items-center justify-center rounded border border-[#d9dbdf] text-[12px] tracking-[-0.1px] text-[#1a6be0]">Hiển thị tất cả</div>
      <Ic s={10} vb={10} w={1.9} cls="mr-[13px] ml-[13px]"><path d="m1 1 8 8m0-8L1 9" /></Ic>
    </div>
  );
}

function Chrome({ badge, color }: { badge?: string; color?: string }) {
  return (
    <svg width="28" height="28" viewBox="0 0 28 28">
      <circle cx="13" cy="13" r="12" fill="#34a853" /><path d="M13 13 2.600 7A12 12 0 0 1 23.400 7H13z" fill="#ea4335" /><path d="M13 7h10.400A12 12 0 0 1 13 25l5.200-9z" fill="#fbbc04" />
      <circle cx="13" cy="13" r="6" fill="#fff" /><circle cx="13" cy="13" r="4.800" fill="#2b76e8" />
      {badge && <><circle cx="19.500" cy="20" r="7.200" fill={color} /><text x="19.500" y="23.500" fontSize="9.500" fill="#fff" textAnchor="middle">{badge}</text></>}
    </svg>
  );
}

function TaskItem({ bar, bg = "", children }: Kids & { bar?: boolean; bg?: string }) {
  return (
    <div className={"relative flex h-full w-[49px] shrink-0 items-center justify-center " + bg}>
      {children}
      {bar && <span className="absolute bottom-0 h-[2px] w-[40px] bg-[#76b9ed]" />}
    </div>
  );
}

function Taskbar() {
  return (
    <div className={"flex h-[40px] items-center bg-[linear-gradient(90deg,#1e1d1d_0%,#1e1d1d_24%,#32261b_32%,#231f1c_42%,#3a2b20_53%,#38291f_65%,#1c1c1d_76%,#1c1c1d_100%)] text-white " + UI}>
      <div className="flex h-full w-[48px] items-center justify-center"><svg width="16" height="16" viewBox="0 0 16 16" fill="#fff"><path d="M0 2.200 6.500 1.300v6.300H0zM7.300 1.200 16 0v7.600H7.300zM0 8.400h6.500v6.300L0 13.800zM7.300 8.400H16V16l-8.700-1.200z" /></svg></div>
      <div className="flex h-full w-[288px] items-center border border-[#bdbdbd] bg-[#f2f2f2] text-[#333]">
        <Ic s={17} vb={17} w={1.3} cls="ml-[11px]"><circle cx="10.500" cy="6.500" r="5" /><path d="m7 10-5.500 5.500" /></Ic>
        <span className="ml-[11px] w-[170px] text-[14px] tracking-[-0.02px] whitespace-nowrap">Type here to search</span>
        <svg width="78" height="38" viewBox="0 0 78 38">
          <path d="M0 38 14 26h57l7 12z" fill="#ecc796" /><path d="M0 38l3-3h72l3 3z" fill="#c8a06e" /><path d="m8 4 1.500 3L12 9l-2.500 1L8 13l-1.500-3L3 9l3.500-1.500z" fill="#d873e9" />
          <path d="m12 15 13-3 3 3 9-4 4 17-25 7z" fill="#5da04e" /><path d="m12 13 13-3 12-2 3 17-13 4-13 4z" fill="#f5f8f1" /><path d="m25 10 4 18M15 17l8-2M16 20l8-2M17 24l8-2M29 15l6-2M30 19l7-2" stroke="#8aa681" />
          <path d="M38 8l3 2-8 10-4 2 1-5z" fill="#f7ae41" /><path d="M38 8l2-3 3 3-2 2z" fill="#f26c6c" />
          <path d="M53 7a6 5 0 0 1 12 0" stroke="#0a3f91" strokeWidth="2" fill="none" /><path d="M49 17a10 12 0 0 1 20 0v15a3 3 0 0 1-3 3H52a3 3 0 0 1-3-3z" fill="#0b7ff5" /><path d="M51 24a8 6 0 0 1 16 0v7a3 3 0 0 1-3 3H54a3 3 0 0 1-3-3z" fill="#0a5ed0" /><path d="M53 32h12" stroke="#b59bff" strokeWidth="2" /><path d="M54 12h10" stroke="#57c4ff" strokeWidth="3" /><circle cx="73" cy="10" r="2" fill="#fdb510" /><circle cx="43" cy="21" r="2" fill="#44c4ef" />
        </svg>
      </div>
      <TaskItem><Ic s={18} vb={18} w={1.3} c="#fff"><path d="M1 1v3h10V1M1 7h10v5H1zM1 17.500v-3h10v3M15 1v2M15 8v9M14 6.500h2" /></Ic></TaskItem>
      <TaskItem><Ic s={18} vb={18} w={2.2} c="#1d68ad" cls="ml-1"><circle cx="8" cy="8" r="5" /><path d="m12 12 4 4" /></Ic></TaskItem>
      <div className="ml-px" />
      <TaskItem bar>
        <svg width="26" height="26" viewBox="0 0 26 26">
          <defs><linearGradient id="edge-a" x1="0" y1="0" x2="1" y2=".5"><stop offset="0" stopColor="#1a9fe6" /><stop offset=".6" stopColor="#35c1c8" /><stop offset="1" stopColor="#6be069" /></linearGradient><linearGradient id="edge-b" x1="0" y1="0" x2="1" y2="1"><stop offset="0" stopColor="#1794e6" /><stop offset="1" stopColor="#0c59a4" /></linearGradient></defs>
          <path d="M1 13a12 12 0 0 1 24-.5c0 4-3 5.500-6 5.500-2.500 0-4.500-1-4-2.500 2-3-.5-6.500-5-6.500-4 0-8 2-9 4z" fill="url(#edge-a)" />
          <path d="M1 14c0-4 4-6.500 8.500-6 4 .5 6 3 6 5-2-1.500-5-.500-5.500 2.500-.5 4 4 8 12 5.500A12 12 0 0 1 1 14z" fill="url(#edge-b)" />
          <path d="M10 14c-1.500 5 3 10 12.500 7-2 2.500-5.500 4-9 4C8 24.500 6 17 10 14z" fill="#0a4584" />
        </svg>
      </TaskItem>
      <TaskItem bar><svg width="24" height="22" viewBox="0 0 24 22"><path d="M1 2h8l2 2h12v16H1z" fill="#e8a821" /><path d="M1 5h22v14H1z" fill="#fcd462" /><path d="M5 12h14v8h-4v-4h-6v4H5z" fill="#3f90d8" /></svg></TaskItem>
      <TaskItem><div className="pt-0.5 pl-0.5"><Chrome /></div></TaskItem>
      <TaskItem><svg width="24" height="24" viewBox="0 0 24 24"><path d="M12 4h10v16H12z" fill="#fff" stroke="#d04a27" /><path d="M15 12h5M15 15h5M15 9h5" stroke="#d04a27" /><path d="M1 3 15 1v22L1 21z" fill="#d04a27" /><path d="M6 17V8h3a2.500 2.500 0 0 1 0 5H6" stroke="#fff" strokeWidth="2" fill="none" /></svg></TaskItem>
      <TaskItem bg="ml-px bg-[#b06227] border-b-2 border-[#f5750d]">
        <svg width="28" height="30" viewBox="0 0 28 30"><path d="M2 10q0-7 8-7h7q9 0 9 8v6q0 9-9 9H7q-4 0-5-4z" fill="#fff" /><text x="6" y="15.500" fontSize="9" fontWeight="bold" fill="#0a68ff">Zalo</text><circle cx="19.500" cy="20.500" r="7.500" fill="#fb0d0d" /><text x="19.500" y="24.500" fontSize="11" fill="#fff" textAnchor="middle">1</text></svg>
      </TaskItem>
      <TaskItem><svg width="24" height="24" viewBox="0 0 24 24"><circle cx="12" cy="13" r="10.500" fill="#ff6a2b" /><path d="M15 0c4 3 8 7 8 13a11 11 0 0 1-20 6c6 3 13 2 15-4 1-4-3-6-3-9z" fill="#ffc52e" /><circle cx="11" cy="13.500" r="5" fill="#7a3fd2" /><path d="M2 10c1-4 3-6 4-8 0 3 3 4 6 4-2 1-2 3-5 3-1 3 0 5 2 6-4 0-7-1-7-5z" fill="#ff3c4e" /></svg></TaskItem>
      <TaskItem><svg width="24" height="24" viewBox="0 0 24 24"><path d="M12 1 22 6l-10 5L2 6z" fill="#97bd3d" /><path d="m2 6 10 5v12L2 18z" fill="#b73a4d" /><path d="m22 6-10 5v12l10-5z" fill="#3d8ec7" /><path d="m7 7 5-2 5 2v8l-5 3-5-3z" fill="#eef4e4" /><path d="m12 10 5-3v8l-5 3z" fill="#c6d9df" /></svg></TaskItem>
      <TaskItem bar><Chrome badge="t" color="#5a67b8" /></TaskItem>
      <TaskItem bar bg="bg-[#64584f]"><Chrome badge="D" color="#4f2da8" /></TaskItem>
      <TaskItem bar><svg width="26" height="26" viewBox="0 0 26 26"><ellipse cx="12" cy="15" rx="11" ry="9" fill="#c5e3f3" transform="rotate(-15 12 15)" /><circle cx="6" cy="12" r="2" fill="#e64545" /><circle cx="11" cy="9" r="2" fill="#35a54b" /><circle cx="5.500" cy="17.500" r="2" fill="#f0a81e" /><circle cx="11" cy="20" r="2" fill="#2b78e4" /><path d="M14 21 20 7l2 1-6 14z" fill="#c98a3e" /><path d="M20 7c0-3 1-6 4-6 1 3 0 5-2 7z" fill="#a56b3b" /></svg></TaskItem>
      <div className="ml-auto flex items-center">
        <svg width="28" height="28" viewBox="0 0 28 28"><path d="M18 3c4 3 6 7 5 12-1 5-6 8-12 6 5-1 7-4 7-9 0-4 0-6 0-9z" fill="#ffab24" /><circle cx="22.500" cy="4" r="3" fill="#d8302f" /><path d="M4 11a4 4 0 0 1 2-7 5 5 0 0 1 9 1 3 3 0 0 1 1 6z" fill="#cfe0fb" /><path d="M14 25a4 4 0 0 1 1-6 5 5 0 0 1 8 0 3.500 3.500 0 0 1 2 6z" fill="#b2cdf7" /></svg>
        <span className="ml-[6px] w-[54px] text-[14px] tracking-[-0.4px]">26°C</span>
        <Ic s={14} vb={14} w={1.4} c="#fff"><path d="m1.500 9.500 5.500-5 5.500 5" /></Ic>
        <Ic s={16} vb={16} w={1.3} c="#fff" cls="ml-[10px]"><path d="M6 4h8.500v8H5V9M1 2h4v3.500H1zM3 6v4" /><path d="M8 6h5v4H8z" fill="#fff" /></Ic>
        <Ic s={16} vb={16} w={1.2} c="#fff" cls="ml-[8px]"><path d="M3.500 5h7v6h-7zM10.500 7l2.500-1.500v5L10.500 9M5 2.500c2-1.500 4-1.500 6 0M5 13.500c2 1.500 4 1.500 6 0" /></Ic>
        <Ic s={16} vb={16} w={1.2} c="#fff" cls="ml-[7px]"><rect x="5.500" y="0" width="5" height="10" rx="2" fill="#fff" /><path d="M3.500 8c0 5 9 5 9 0M8 12v3M5.500 15.200h5" /></Ic>
        <Ic s={16} vb={16} w={1.2} c="#ddd" cls="ml-[9px]"><path d="M2 14C2 8 6 4 13 3.500M5 14c0-4 3-7 8-7.500M8 14c0-2 2-4 5-4.500M11 14c0-1 1-1.500 2-1.500" /></Ic>
        <Ic s={16} vb={16} w={1.2} c="#fff" cls="ml-[8px]"><path d="M1 6h2.500L7 3v10l-3.500-3H1zM9.500 6c1 1 1 3 0 4M11.500 4c2 2 2 6 0 8M13.500 2.500c2.500 3 2.500 8 0 11" /></Ic>
        <span className="ml-[10px] w-[34px] text-[12px] tracking-[-0.4px]">ENG</span>
        <div className="w-[56px] text-center text-[12px] leading-[18px] tracking-[-0.5px] whitespace-nowrap">10:13 PM<br />5/30/2023</div>
        <svg width="26" height="26" viewBox="0 0 26 26" className="mr-[14px] ml-[17px]"><path d="M1 2h15v15H9l-3 3v-3H1z" fill="#fff" /><path d="M4 6h9M4 9.500h9M4 13h5" stroke="#222" strokeWidth="1.300" /><circle cx="16" cy="18" r="7.500" fill="#484848" stroke="#999" /><text x="16" y="22" fontSize="11" fill="#fff" textAnchor="middle">2</text></svg>
      </div>
    </div>
  );
}

export default function App() {
  return (
    <div className="flex h-[768px] w-[1366px] flex-col overflow-hidden bg-white">
      <BrowserTop />
      <AppHeader />
      <Toolbar />
      <div className="flex h-[461px] shrink-0">
        <SidePanel />
        <Canvas />
      </div>
      <BottomBar />
      <Downloads />
      <Taskbar />
    </div>
  );
}
